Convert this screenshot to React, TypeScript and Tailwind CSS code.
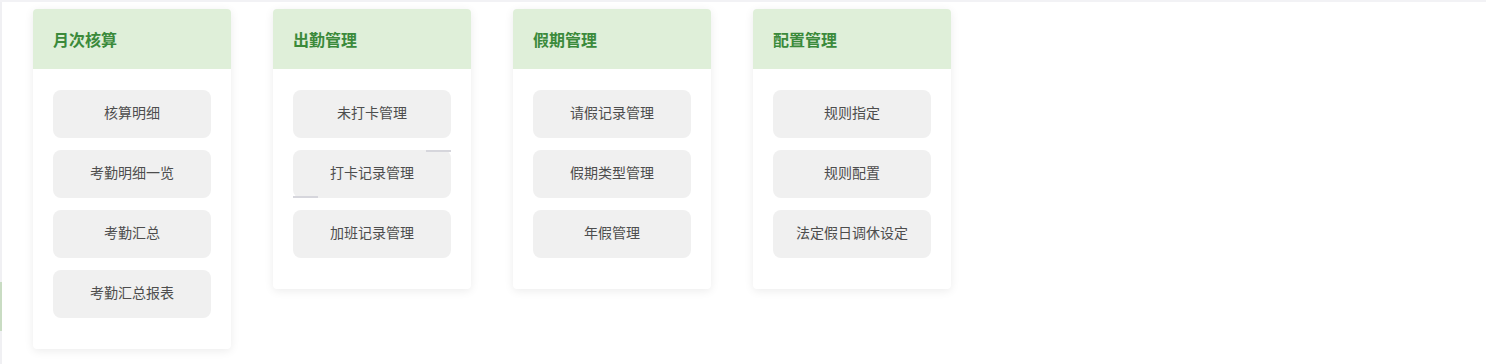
const GROUPS = [
  { title: '月次核算', items: ['核算明细', '考勤明细一览', '考勤汇总', '考勤汇总报表'] },
  { title: '出勤管理', items: ['未打卡管理', '打卡记录管理', '加班记录管理'] },
  { title: '假期管理', items: ['请假记录管理', '假期类型管理', '年假管理'] },
  { title: '配置管理', items: ['规则指定', '规则配置', '法定假日调休设定'] },
]

function Card({ title, items, hoverLine }: { title: string; items: string[]; hoverLine?: boolean }) {
  return (
    <div className="w-[198px] bg-white rounded-[4px] shadow-[0_2px_10px_rgba(0,0,0,0.08)] overflow-hidden">
      <div className="h-[60px] bg-[#dfefd9] flex items-center pl-[20px] pb-[1px] text-[16px] font-bold text-[#3b8a3b]">
        {title}
      </div>
      <div className="flex flex-col gap-[12px] px-[20px] pt-[21px] pb-[31px]">
        {items.map((it, i) => (
          <div key={it} className="relative">
            <button className="w-full h-[48px] rounded-[8px] bg-[#f0f0f0] pb-[3px] text-[14px] text-[#4d4d4d] flex items-center justify-center">
              {it}
            </button>
            {hoverLine && i === 1 && (
              <>
                <div className="absolute right-0 top-0 w-[25px] h-[2px] bg-[#d6d6dc]" />
                <div className="absolute left-0 bottom-0 w-[25px] h-[2px] bg-[#d6d6dc]" />
              </>
            )}
          </div>
        ))}
      </div>
    </div>
  )
}

export default function App() {
  return (
    <div className="relative w-[1486px] h-[364px] bg-white font-['Noto_Sans_CJK_SC','Noto_Sans',sans-serif] overflow-hidden">
      <div className="h-[2px] bg-[#f2f2f5]" />
      <div className="absolute left-0 top-[2px] w-[2px] h-[362px] bg-[#f0f0f3]">
        <div className="mt-[280px] h-[49px] bg-[#c9dcc3]" />
      </div>
      <div className="flex items-start gap-[42px] pl-[33px] pt-[7px]">
        {GROUPS.map((g, i) => (
          <Card key={g.title} title={g.title} items={g.items} hoverLine={i === 1} />
        ))}
      </div>
    </div>
  )
}
